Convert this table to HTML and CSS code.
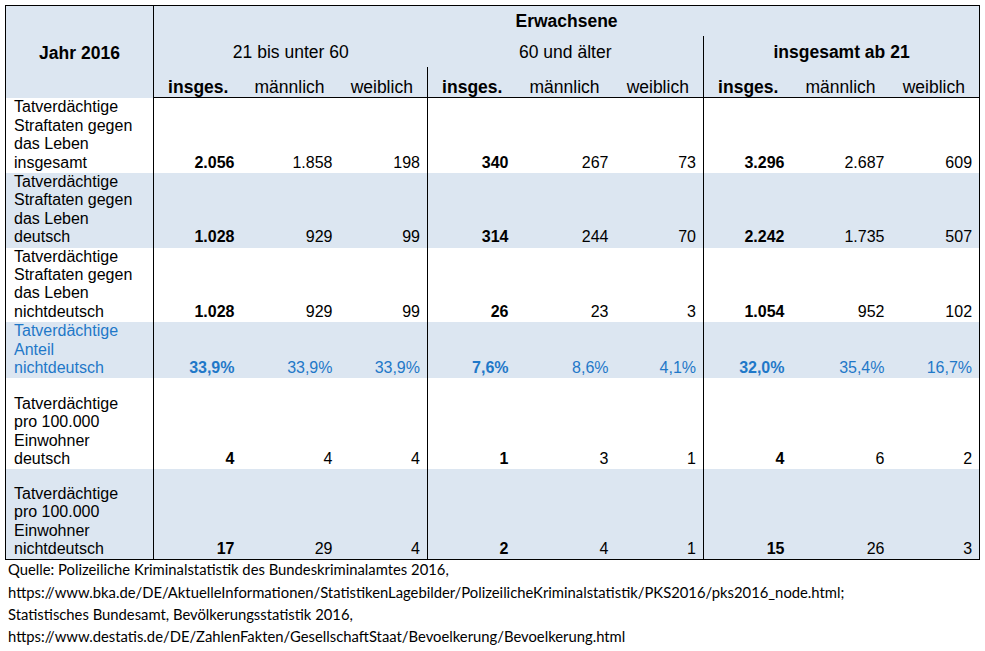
FILE: index.html
```html
<!DOCTYPE html>
<html lang="de">
<head>
<meta charset="utf-8">
<title>Tatverdächtige 2016</title>
<link rel="stylesheet" href="styles.css">
</head>
<body>
<div class="page">
<table class="stats">
  <colgroup>
    <col class="c-label">
    <col class="c1"><col class="c2a"><col class="c3">
    <col class="c1"><col class="c2"><col class="c3">
    <col class="c1"><col class="c2"><col class="c3">
  </colgroup>
  <thead>
    <tr class="h1">
      <th rowspan="3" class="year">Jahr 2016</th>
      <th colspan="9" class="bold">Erwachsene</th>
    </tr>
    <tr class="h2">
      <th colspan="3">21 bis unter 60</th>
      <th colspan="3">60 und älter</th>
      <th colspan="3" class="bold sep">insgesamt ab 21</th>
    </tr>
    <tr class="h3">
      <th class="bold">insges.</th><th>männlich</th><th>weiblich</th>
      <th class="bold sep">insges.</th><th>männlich</th><th>weiblich</th>
      <th class="bold sep">insges.</th><th>männlich</th><th>weiblich</th>
    </tr>
  </thead>
  <tbody>
    <tr class="r1">
      <td class="label">Tatverdächtige<br>Straftaten gegen<br>das Leben<br>insgesamt</td>
      <td class="n1 bold">2.056</td><td class="n2">1.858</td><td class="n3">198</td>
      <td class="n1 bold sep">340</td><td class="n2">267</td><td class="n3">73</td>
      <td class="n1 bold sep">3.296</td><td class="n2">2.687</td><td class="n3">609</td>
    </tr>
    <tr class="r2 shade">
      <td class="label">Tatverdächtige<br>Straftaten gegen<br>das Leben<br>deutsch</td>
      <td class="n1 bold">1.028</td><td class="n2">929</td><td class="n3">99</td>
      <td class="n1 bold sep">314</td><td class="n2">244</td><td class="n3">70</td>
      <td class="n1 bold sep">2.242</td><td class="n2">1.735</td><td class="n3">507</td>
    </tr>
    <tr class="r3">
      <td class="label">Tatverdächtige<br>Straftaten gegen<br>das Leben<br>nichtdeutsch</td>
      <td class="n1 bold">1.028</td><td class="n2">929</td><td class="n3">99</td>
      <td class="n1 bold sep">26</td><td class="n2">23</td><td class="n3">3</td>
      <td class="n1 bold sep">1.054</td><td class="n2">952</td><td class="n3">102</td>
    </tr>
    <tr class="r4 shade share">
      <td class="label">Tatverdächtige<br>Anteil<br>nichtdeutsch</td>
      <td class="n1 bold">33,9%</td><td class="n2">33,9%</td><td class="n3">33,9%</td>
      <td class="n1 bold sep">7,6%</td><td class="n2">8,6%</td><td class="n3">4,1%</td>
      <td class="n1 bold sep">32,0%</td><td class="n2">35,4%</td><td class="n3">16,7%</td>
    </tr>
    <tr class="r5">
      <td class="label">Tatverdächtige<br>pro 100.000<br>Einwohner<br>deutsch</td>
      <td class="n1 bold">4</td><td class="n2">4</td><td class="n3">4</td>
      <td class="n1 bold sep">1</td><td class="n2">3</td><td class="n3">1</td>
      <td class="n1 bold sep">4</td><td class="n2">6</td><td class="n3">2</td>
    </tr>
    <tr class="r6 shade">
      <td class="label">Tatverdächtige<br>pro 100.000<br>Einwohner<br>nichtdeutsch</td>
      <td class="n1 bold">17</td><td class="n2">29</td><td class="n3">4</td>
      <td class="n1 bold sep">2</td><td class="n2">4</td><td class="n3">1</td>
      <td class="n1 bold sep">15</td><td class="n2">26</td><td class="n3">3</td>
    </tr>
  </tbody>
</table>
<div class="source">
  <p>Quelle: Polizeiliche Kriminalstatistik des Bundeskriminalamtes 2016,</p>
  <p>https://www.bka.de/DE/AktuelleInformationen/StatistikenLagebilder/PolizeilicheKriminalstatistik/PKS2016/pks2016_node.html;</p>
  <p>Statistisches Bundesamt, Bevölkerungsstatistik 2016,</p>
  <p>https://www.destatis.de/DE/ZahlenFakten/GesellschaftStaat/Bevoelkerung/Bevoelkerung.html</p>
</div>
</div>
</body>
</html>
```

FILE: styles.css
```css
html, body {
  margin: 0;
  padding: 0;
  background: #ffffff;
}

.page {
  padding: 5px 0 0 5px;
}

.stats {
  border-collapse: collapse;
  table-layout: fixed;
  width: 975px;
  border: 1px solid #000;
  font-family: "Liberation Sans", Arial, sans-serif;
  font-size: 16px;
  line-height: 18.4px;
  color: #000;
}

.c-label { width: 148px; }
.c1 { width: 89px; }
.c2 { width: 96px; }
.c2a { width: 94px; }
.c3 { width: 91px; }

.stats th,
.stats td {
  padding: 0;
  white-space: nowrap;
}

.stats thead th {
  background: #dce6f1;
  font-weight: normal;
  font-size: 17.5px;
  line-height: 20px;
  text-align: center;
}

.stats thead .bold,
.stats .bold {
  font-weight: bold;
}

.stats thead .year {
  font-weight: bold;
  vertical-align: middle;
  border-right: 1px solid #000;
  padding-top: 2px;
}

.h1 th { height: 30px; vertical-align: middle; }
.h2 th { height: 31px; vertical-align: middle; }
.stats thead .h3 th { height: 30px; vertical-align: bottom; line-height: 19px; }

.stats thead tr.h3 th {
  border-bottom: 1px solid #000;
}

.stats .sep {
  border-left: 1px solid #000;
}

.stats td {
  vertical-align: bottom;
  text-align: right;
  padding-bottom: 1px;
}

.stats td.label {
  text-align: left;
  padding-left: 8px;
  border-right: 1px solid #000;
}

.stats td.n1 { padding-right: 8px; }
.stats td.n2 { padding-right: 4px; }
.stats td.n3 { padding-right: 7px; }

.shade td { background: #dce6f1; }

.share td { color: #1f78c8; }

.r1 td { height: 74px; }
.r2 td { height: 72px; }
.r3 td { height: 72px; }
.r4 td { height: 53px; }
.r5 td { height: 90px; }
.r6 td { height: 89px; }

.source {
  font-family: Lato, "Open Sans", sans-serif;
  font-size: 14.8px;
  color: #000;
  margin-top: -2px;
  padding-left: 3px;
}

.source p {
  margin: 0;
  line-height: 22.3px;
}
```
